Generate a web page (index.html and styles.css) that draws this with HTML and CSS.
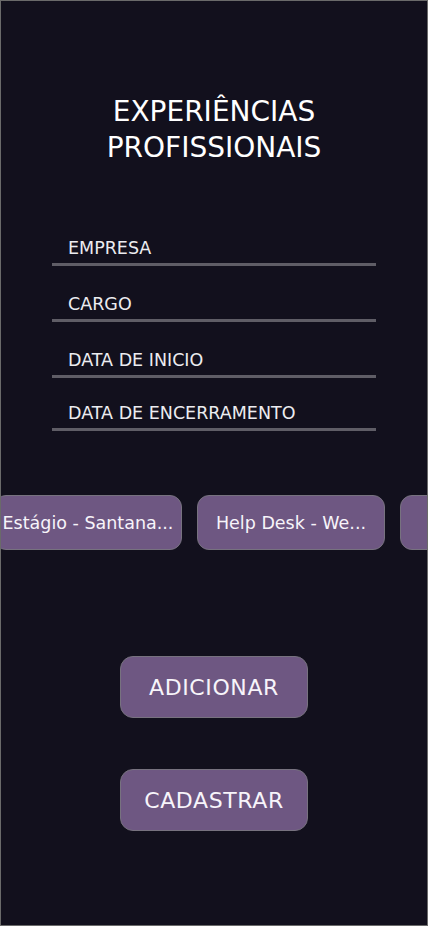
FILE: index.html
```html
<!DOCTYPE html>
<html lang="pt-BR">
<head>
<meta charset="utf-8">
<title>Experiências Profissionais</title>
<link rel="stylesheet" href="styles.css">
</head>
<body>
<main class="screen">
  <h1 class="title">EXPERIÊNCIAS<br>PROFISSIONAIS</h1>
  <form class="form">
    <label class="field field-1"><input type="text" placeholder="EMPRESA"></label>
    <label class="field"><input type="text" placeholder="CARGO"></label>
    <label class="field"><input type="text" placeholder="DATA DE INICIO"></label>
    <label class="field field-last"><input type="text" placeholder="DATA DE ENCERRAMENTO"></label>
  </form>
  <div class="chips">
    <div class="chip-track">
      <div class="chip">Estágio - Santana...</div>
      <div class="chip">Help Desk - We...</div>
      <div class="chip">Suporte...</div>
    </div>
  </div>
  <div class="actions">
    <button class="btn" type="button">ADICIONAR</button>
    <button class="btn" type="button">CADASTRAR</button>
  </div>
</main>
</body>
</html>
```

FILE: styles.css
```css
* { box-sizing: border-box; }
html, body { margin: 0; padding: 0; background: #12101d; }
.screen {
  width: 428px;
  height: 926px;
  border: 1px solid #6a6a6a;
  background: #12101d;
  overflow: hidden;
  font-family: "DejaVu Sans", "Liberation Sans", sans-serif;
  color: #ffffff;
  display: flex;
  flex-direction: column;
  align-items: center;
}
.title {
  margin: 93px 0 0;
  font-weight: 400;
  font-size: 28px;
  line-height: 36px;
  text-align: center;
  letter-spacing: 0;
}
.form {
  width: 324px;
  margin-top: 64px;
  display: flex;
  flex-direction: column;
}
.field {
  border-bottom: 3px solid #5f5d66;
  height: 56px;
  display: flex;
  align-items: flex-end;
}
.field-1 { height: 36px; }
.field-last { height: 53px; }
.field input {
  width: 100%;
  background: transparent;
  border: 0;
  outline: none;
  padding: 0 0 5px 16px;
  font-family: inherit;
  font-size: 17.5px;
  color: #fff;
}
.field input::placeholder { color: #ececf0; opacity: 1; }
.chips {
  width: 100%;
  margin-top: 64px;
  overflow: hidden;
}
.chip-track {
  display: flex;
  gap: 15px;
  margin-left: -7px;
}
.chip {
  flex: 0 0 188px;
  height: 55px;
  border-radius: 12px;
  border: 1px solid #77727f;
  background: #6e5782;
  display: flex;
  align-items: center;
  justify-content: center;
  white-space: nowrap;
  font-size: 17.5px;
  color: #f7f4fa;
}
.actions {
  margin-top: 106px;
  display: flex;
  flex-direction: column;
  align-items: center;
  gap: 51px;
}
.btn {
  width: 188px;
  height: 62px;
  border-radius: 13px;
  border: 1px solid #77727f;
  background: #6e5782;
  color: #f7f4fa;
  font-family: inherit;
  font-size: 22px;
  letter-spacing: 0.6px;
}
```
